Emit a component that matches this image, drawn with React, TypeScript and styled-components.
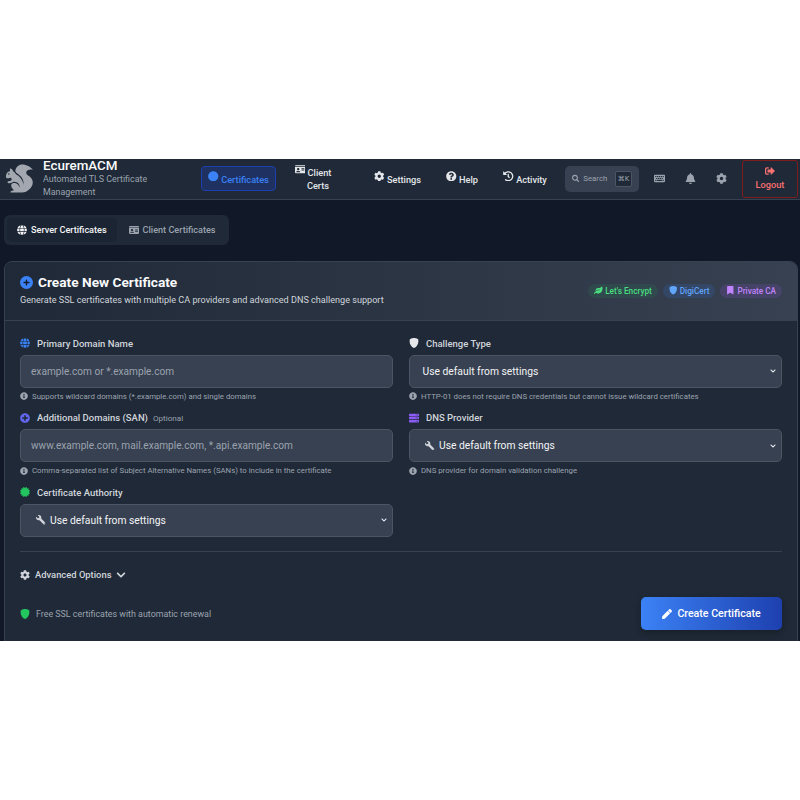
import React from 'react';
import styled, { createGlobalStyle } from 'styled-components';
import { BsShieldFill } from 'react-icons/bs';
import {
  FaBell,
  FaBookmark,
  FaCertificate,
  FaChevronDown,
  FaCircle,
  FaCog,
  FaGlobe,
  FaHistory,
  FaIdCard,
  FaInfoCircle,
  FaKeyboard,
  FaLeaf,
  FaPen,
  FaPlus,
  FaPlusCircle,
  FaQuestionCircle,
  FaSearch,
  FaServer,
  FaSignOutAlt,
  FaWrench,
} from 'react-icons/fa';
import { GiSquirrel } from 'react-icons/gi';

const uiFont = 'Roboto, "Noto Sans", "Liberation Sans", sans-serif';

const GlobalStyle = createGlobalStyle`
  html, body { margin: 0; padding: 0; background: #fff; }
  * { box-sizing: border-box; }
  body { font-family: ${uiFont}; }
`;

const Page = styled.div`
  height: 800px;
  display: flex;
  flex-direction: column;
  justify-content: center;
`;

const Screen = styled.div`
  height: 482px;
  margin-top: -1px;
  overflow: hidden;
  background: #111827;
`;

const Header = styled.header`
  height: 41px;
  display: flex;
  align-items: center;
  padding: 0 2px 0 4px;
  background: #1f2937;
  border-bottom: 1px solid #374151;
`;

const Brand = styled.div`
  width: 197px;
  display: flex;
  align-items: center;
  gap: 8px;
  color: #a3a8b0;
  > svg { transform: scaleX(-1); }
`;

const BrandText = styled.div`
  width: 125px;
`;

const BrandName = styled.div`
  font-size: 13.4px;
  font-weight: 500;
  line-height: 14px;
  color: #f9fafb;
`;

const BrandSub = styled.div`
  font-size: 8.9px;
  line-height: 13px;
  color: #9ca3af;
`;

const Nav = styled.nav`
  display: flex;
  gap: 6px;
  align-items: center;
`;

const NavItem = styled.a<{ $w: number; $active?: boolean }>`
  width: ${p => p.$w}px;
  display: block;
  text-align: center;
  font-size: 9.2px;
  font-weight: 500;
  line-height: 13px;
  padding: 4px 0 5px;
  color: ${p => (p.$active ? '#3b82f6' : '#e5e7eb')};
  border: 1px solid ${p => (p.$active ? '#1e40af' : 'transparent')};
  border-radius: 4px;
  background: ${p => (p.$active ? '#1e3a8a80' : 'transparent')};
  svg {
    font-size: 10.5px;
    margin-right: 2.5px;
    vertical-align: 1px;
  }
`;

const FirstLine = styled.span`
  margin-right: 10px;
`;

const SearchBox = styled.div`
  width: 74px;
  height: 26px;
  margin-left: 4px;
  display: flex;
  align-items: center;
  padding: 0 7px;
  gap: 4px;
  background: #374151;
  border-radius: 5px;
  font-size: 7.8px;
  color: #9ca3af;
  svg { font-size: 9px; }
`;

const Kbd = styled.kbd`
  margin-left: 4px;
  width: 20px;
  height: 16px;
  display: flex;
  align-items: center;
  justify-content: center;
  font-family: "DejaVu Sans", sans-serif;
  font-size: 7px;
  color: #9ca3af;
  background: #1f2937;
  border: 1px solid #4b5563;
  border-radius: 2px;
`;

const IconButton = styled.span<{ $w: number }>`
  width: ${p => p.$w}px;
  display: flex;
  justify-content: center;
  color: #9ca3af;
  font-size: 11px;
`;

const IconRow = styled.div`
  display: flex;
  margin-left: 5px;
`;

const LogoutButton = styled.a`
  width: 56px;
  height: 38px;
  margin-left: auto;
  display: flex;
  flex-direction: column;
  align-items: center;
  justify-content: center;
  gap: 2px;
  border: 1px solid #7f1d1d;
  border-radius: 3px;
  color: #f87171;
  font-size: 9.2px;
  font-weight: 500;
  line-height: 13px;
  svg { font-size: 10px; }
`;

const Main = styled.main`
  padding: 15px 2px 0 4px;
`;

const Tabs = styled.div`
  width: 225px;
  height: 30px;
  padding: 3px;
  display: flex;
  gap: 2px;
  background: #1f2937;
  border-radius: 6px;
`;

const Tab = styled.div<{ $active?: boolean }>`
  height: 24px;
  display: flex;
  align-items: center;
  gap: 4px;
  padding: 0 10px;
  white-space: nowrap;
  font-size: 9.1px;
  font-weight: 500;
  color: ${p => (p.$active ? '#f3f4f6' : '#9ca3af')};
  background: ${p => (p.$active ? '#1b2432' : 'transparent')};
  border-radius: 5px;
  svg { font-size: 10px; }
`;

const Card = styled.section`
  margin-top: 16px;
  background: #1f2937;
  border: 1px solid #374151;
  border-radius: 8px;
  overflow: hidden;
`;

const CardHead = styled.div`
  height: 59px;
  padding: 0 15px;
  display: flex;
  align-items: center;
  justify-content: space-between;
  background: linear-gradient(90deg, #1f2937 0%, #374151 100%);
  border-bottom: 1px solid #374151;
`;

const Title = styled.h2`
  margin: 0;
  display: flex;
  align-items: center;
  gap: 5px;
  font-size: 13.7px;
  line-height: 16px;
  font-weight: 700;
  color: #f9fafb;
`;

const TitleBadge = styled.span`
  width: 13px;
  height: 13px;
  border-radius: 50%;
  background: #3b82f6;
  color: #111827;
  display: flex;
  align-items: center;
  justify-content: center;
  font-size: 7px;
`;

const Subtitle = styled.p`
  margin: 4px 0 0;
  font-size: 9.1px;
  line-height: 13px;
  color: #d1d5db;
`;

const Pills = styled.div`
  display: flex;
  gap: 5px;
`;

const Pill = styled.span<{ $fg: string; $bg: string }>`
  height: 14px;
  padding: 0 6px;
  display: flex;
  align-items: center;
  gap: 2.5px;
  font-size: 8.2px;
  font-weight: 500;
  color: ${p => p.$fg};
  background: ${p => p.$bg};
  border-radius: 7px;
  svg { font-size: 8.5px; }
`;

const CardBody = styled.div`
  padding: 16px 15px 24px;
`;

const FormGrid = styled.div`
  display: grid;
  grid-template-columns: 373px 373px;
  column-gap: 16px;
`;

const Column = styled.div`
  display: flex;
  flex-direction: column;
  gap: 9.5px;
`;

const Label = styled.label`
  height: 13px;
  display: flex;
  align-items: center;
  font-size: 9.5px;
  font-weight: 500;
  color: #d1d5db;
`;

const LabelIcon = styled.span<{ $c: string }>`
  width: 17px;
  display: flex;
  color: ${p => p.$c};
  font-size: 10px;
`;

const Optional = styled.span`
  margin-left: 5px;
  font-size: 8.1px;
  font-weight: 400;
  color: #9ca3af;
`;

const TextInput = styled.input`
  display: block;
  width: 100%;
  height: 33px;
  margin-top: 5px;
  padding: 0 10px;
  font: 400 10.15px ${uiFont};
  color: #f3f4f6;
  background: #374151;
  border: 1px solid #4b5563;
  border-radius: 5px;
  outline: none;
  &::placeholder { color: #9ca3af; opacity: 1; }
`;

const SelectBox = styled.div`
  width: 100%;
  height: 33px;
  margin-top: 5px;
  padding: 0 5px 0 12.5px;
  display: flex;
  align-items: center;
  gap: 5px;
  font-size: 10.3px;
  color: #f3f4f6;
  background: #374151;
  border: 1px solid #4b5563;
  border-radius: 5px;
`;

const SelectArrow = styled(FaChevronDown)`
  margin-left: auto;
  font-size: 6px;
`;

const Wrench = styled(FaWrench)`
  margin-left: 2px;
  font-size: 9.5px;
  transform: scaleX(-1);
  color: #d1d5db;
`;

const Hint = styled.p`
  height: 11px;
  margin: 3px 0 0;
  display: flex;
  align-items: center;
  gap: 4px;
  font-size: 7.8px;
  line-height: 11px;
  color: #9ca3af;
  svg { font-size: 8px; }
`;

const Divider = styled.hr`
  margin: 14.5px 0 0;
  border: 0;
  border-top: 1px solid #374151;
`;

const Advanced = styled.div`
  margin-top: 16px;
  height: 13px;
  display: flex;
  align-items: center;
  gap: 5px;
  font-size: 9.4px;
  font-weight: 500;
  color: #d1d5db;
  svg { font-size: 10px; }
`;

const Footer = styled.div`
  margin-top: 16px;
  display: flex;
  align-items: center;
  justify-content: space-between;
`;

const Renewal = styled.div`
  display: flex;
  align-items: center;
  gap: 6px;
  font-size: 8.9px;
  color: #9ca3af;
  svg { color: #22c55e; font-size: 10px; }
`;

const PrimaryButton = styled.button`
  width: 141px;
  height: 33px;
  display: flex;
  align-items: center;
  justify-content: center;
  gap: 5px;
  font: 500 10.6px ${uiFont};
  color: #fff;
  background: linear-gradient(90deg, #3b82f6, #1e40af);
  border: 0;
  border-radius: 5px;
  box-shadow: 0 3px 6px rgba(0, 0, 0, 0.25);
  svg { font-size: 10px; }
`;

export default function App(): React.ReactElement {
  return (
    <Page>
      <GlobalStyle />
      <Screen>
        <Header>
          <Brand>
            <GiSquirrel size={31} />
            <BrandText>
              <BrandName>EcuremACM</BrandName>
              <BrandSub>Automated TLS Certificate Management</BrandSub>
            </BrandText>
          </Brand>
          <Nav>
            <NavItem $w={75} $active><FaCircle />Certificates</NavItem>
            <NavItem $w={72}><FaIdCard /><FirstLine>Client</FirstLine><br />Certs</NavItem>
            <NavItem $w={75}><FaCog />Settings</NavItem>
            <NavItem $w={42}><FaQuestionCircle />Help</NavItem>
            <NavItem $w={72}><FaHistory />Activity</NavItem>
          </Nav>
          <SearchBox>
            <FaSearch />
            Search
            <Kbd>⌘K</Kbd>
          </SearchBox>
          <IconRow>
            <IconButton $w={31}><FaKeyboard /></IconButton>
            <IconButton $w={31}><FaBell /></IconButton>
            <IconButton $w={31}><FaCog /></IconButton>
          </IconRow>
          <LogoutButton><FaSignOutAlt />Logout</LogoutButton>
        </Header>
        <Main>
          <Tabs>
            <Tab $active><FaGlobe />Server Certificates</Tab>
            <Tab><FaIdCard />Client Certificates</Tab>
          </Tabs>
          <Card>
            <CardHead>
              <div>
                <Title>
                  <TitleBadge><FaPlus /></TitleBadge>
                  Create New Certificate
                </Title>
                <Subtitle>Generate SSL certificates with multiple CA providers and advanced DNS challenge support</Subtitle>
              </div>
              <Pills>
                <Pill $fg="#4ade80" $bg="#22c55e1a"><FaLeaf />Let's Encrypt</Pill>
                <Pill $fg="#60a5fa" $bg="#3b82f626"><BsShieldFill />DigiCert</Pill>
                <Pill $fg="#c084fc" $bg="#a855f726"><FaBookmark />Private CA</Pill>
              </Pills>
            </CardHead>
            <CardBody>
              <FormGrid>
                <Column>
                  <div>
                    <Label><LabelIcon $c="#3b82f6"><FaGlobe /></LabelIcon>Primary Domain Name</Label>
                    <TextInput placeholder="example.com or *.example.com" />
                    <Hint><FaInfoCircle />Supports wildcard domains (*.example.com) and single domains</Hint>
                  </div>
                  <div>
                    <Label>
                      <LabelIcon $c="#6366f1"><FaPlusCircle /></LabelIcon>Additional Domains (SAN)
                      <Optional>Optional</Optional>
                    </Label>
                    <TextInput placeholder="www.example.com, mail.example.com, *.api.example.com" />
                    <Hint><FaInfoCircle />Comma-separated list of Subject Alternative Names (SANs) to include in the certificate</Hint>
                  </div>
                  <div>
                    <Label><LabelIcon $c="#22c55e"><FaCertificate /></LabelIcon>Certificate Authority</Label>
                    <SelectBox><Wrench />Use default from settings<SelectArrow /></SelectBox>
                  </div>
                </Column>
                <Column>
                  <div>
                    <Label><LabelIcon $c="#e5e7eb"><BsShieldFill /></LabelIcon>Challenge Type</Label>
                    <SelectBox>Use default from settings<SelectArrow /></SelectBox>
                    <Hint><FaInfoCircle />HTTP-01 does not require DNS credentials but cannot issue wildcard certificates</Hint>
                  </div>
                  <div>
                    <Label><LabelIcon $c="#8b5cf6"><FaServer /></LabelIcon>DNS Provider</Label>
                    <SelectBox><Wrench />Use default from settings<SelectArrow /></SelectBox>
                    <Hint><FaInfoCircle />DNS provider for domain validation challenge</Hint>
                  </div>
                </Column>
              </FormGrid>
              <Divider />
              <Advanced><FaCog />Advanced Options <FaChevronDown /></Advanced>
              <Footer>
                <Renewal><BsShieldFill />Free SSL certificates with automatic renewal</Renewal>
                <PrimaryButton type="button"><FaPen />Create Certificate</PrimaryButton>
              </Footer>
            </CardBody>
          </Card>
        </Main>
      </Screen>
    </Page>
  );
}
